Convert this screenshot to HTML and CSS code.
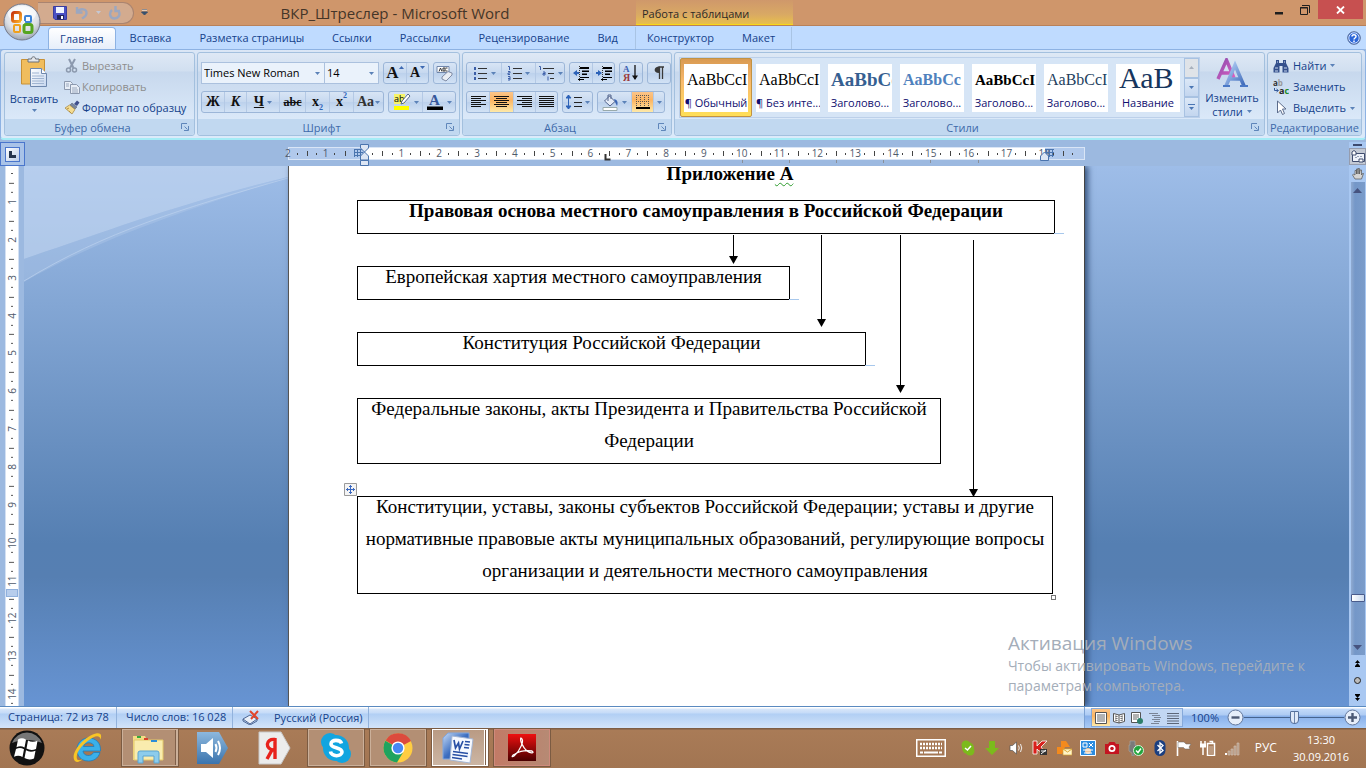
FILE: index.html
```html
<!DOCTYPE html>
<html lang="ru">
<head>
<meta charset="utf-8">
<title>ВКР_Штреслер - Microsoft Word</title>
<link rel="stylesheet" href="styles.css">
</head>
<body>
<svg class="defs" aria-hidden="true">
  <defs>
    <linearGradient id="gPaper" x1="0" y1="0" x2="1" y2="1"><stop offset="0" stop-color="#fff"/><stop offset="1" stop-color="#c5d6ee"/></linearGradient>
    <linearGradient id="gBlueA" x1="0" y1="0" x2="1" y2="1"><stop offset="0" stop-color="#b6d2f8"/><stop offset="1" stop-color="#3c68b8"/></linearGradient>
    <linearGradient id="gPinkA" x1="0" y1="0" x2="1" y2="1"><stop offset="0" stop-color="#8b4fb0"/><stop offset="1" stop-color="#e05fc0"/></linearGradient>
    <linearGradient id="gOrange" x1="0" y1="0" x2="1" y2="1"><stop offset="0" stop-color="#c8350c"/><stop offset="1" stop-color="#fbae26"/></linearGradient>
    <radialGradient id="gOrb" cx=".5" cy=".3" r=".75"><stop offset="0" stop-color="#fff"/><stop offset=".6" stop-color="#dde0e6"/><stop offset="1" stop-color="#8f98a8"/></radialGradient>
    <linearGradient id="gSpk" x1="0" y1="0" x2="0" y2="1"><stop offset="0" stop-color="#8db8de"/><stop offset="1" stop-color="#3b74ad"/></linearGradient>
    <linearGradient id="gRed" x1="0" y1="0" x2="0" y2="1"><stop offset="0" stop-color="#ee1010"/><stop offset="1" stop-color="#4a0000"/></linearGradient>
    <linearGradient id="gWord" x1="0" y1="0" x2="1" y2="1"><stop offset="0" stop-color="#c7dcf7"/><stop offset=".5" stop-color="#3e6fc0"/><stop offset="1" stop-color="#1c3f90"/></linearGradient>
    <symbol id="dd" viewBox="0 0 5 3"><path d="M0 0h5L2.500 3z" fill="currentColor"/></symbol>
    <symbol id="launch" viewBox="0 0 8 8"><path d="M.5 6V.5H6M3.500 3.500l3 3M7.500 3v4.500H3" fill="none" stroke="#5f86ba"/></symbol>
  </defs>
</svg>

<header class="title">
  <button class="orb" aria-label="Кнопка Office">
    <svg width="38" height="38" viewBox="0 0 38 38"><circle cx="19" cy="19" r="18" fill="url(#gOrb)" stroke="#74798a"/><ellipse cx="19" cy="11" rx="14" ry="8" fill="#fff" opacity=".6"/>
      <g fill="none" stroke-width="3"><rect x="9.500" y="9.500" width="8" height="9" rx="2" stroke="url(#gOrange)"/><rect x="22" y="13" width="6" height="6" rx="1" stroke="#3c83d8" stroke-width="2"/><rect x="11" y="22" width="6" height="7" rx="1" stroke="#f0a01c" stroke-width="2"/><rect x="21" y="21.500" width="8" height="8" rx="2" stroke="#55a520"/></g>
      <path d="M18 19h4M20 17v4" stroke="#f4f4f4" stroke-width="2"/></svg>
  </button>
  <div class="qat">
    <button aria-label="Сохранить"><svg width="14" height="14" viewBox="0 0 14 14"><path d="M.5.5h13v13H2L.5 12z" fill="#4a50c4" stroke="#3a3d9e"/><path d="M3 1h8v6H3z" fill="#eef3ff"/><path d="M4 9h7v4.500H4z" fill="#20245e"/><path d="M8 10h2v3H8z" fill="#fff"/></svg></button>
    <button aria-label="Отменить"><svg width="14" height="14" viewBox="0 0 14 14"><path d="M2 1v5.500h5.500M2.500 6C5 2 12 2.500 11.500 7.500c-.3 3-3 4-4.500 5" fill="none" stroke="#9ba7c0" stroke-width="2.400"/></svg></button>
    <svg class="arr pale" width="5" height="3"><use href="#dd"/></svg>
    <button aria-label="Повторить"><svg width="14" height="14" viewBox="0 0 14 14"><path d="M7.500 0v5H12M10.500 5c2.500 4-.5 7.500-4 7.500C2 12.500.5 7 4 4" fill="none" stroke="#9ba7c0" stroke-width="2.400"/></svg></button>
  </div>
  <button class="qatmore" aria-label="Настройка панели"><svg width="7" height="7" viewBox="0 0 7 7"><path d="M1 1h5" stroke="#fff"/><path d="M1 0h5M.5 3h6L3.500 6z" fill="#36506e" stroke="#36506e"/></svg></button>
  <h1>ВКР_Штреслер - Microsoft Word</h1>
  <div class="context">Работа с таблицами</div>
  <div class="win">
    <button aria-label="Свернуть"><svg width="10" height="10"><path d="M1 7h8v2.500H1z" fill="#1e1e1e"/></svg></button>
    <button aria-label="Восстановить"><svg width="10" height="10"><path d="M.5 2.500h7v7h-7zM0 3h8M2 .5h7.500V8" fill="none" stroke="#1e1e1e"/></svg></button>
    <button class="close" aria-label="Закрыть"><svg width="9" height="8"><path d="M1 .5l7 7M8 .5l-7 7" stroke="#fff" stroke-width="1.800"/></svg></button>
  </div>
</header>

<nav class="tabs">
  <button class="on">Главная</button><button>Вставка</button><button>Разметка страницы</button><button>Ссылки</button><button>Рассылки</button><button>Рецензирование</button><button>Вид</button><span class="ctxtabs"><button>Конструктор</button><button>Макет</button></span>
  <button class="help" aria-label="Справка"><svg width="14" height="14" viewBox="0 0 14 14"><circle cx="7" cy="7" r="6.300" fill="#2c66d8" stroke="#5f6f92"/><circle cx="7" cy="7" r="5.200" fill="none" stroke="#cfe0ff"/><path d="M5 5.500c0-2.500 4-2.500 4 0 0 1.500-2 1.500-2 3M7 9.500V11" fill="none" stroke="#fff" stroke-width="1.500"/></svg></button>
</nav>

<main class="ribbon">
  <section class="group clip">
    <div class="body">
      <button class="big paste"><svg width="28" height="32" viewBox="0 0 28 32"><path d="M1.500 3.500h23V28h-23z" fill="#f0bd5e" stroke="#c79137"/><path d="M8 6V3h3.500c0-3 4-3 4 0H19v3z" fill="#e4e6ea" stroke="#6b7078"/><path d="M10.500 12.500h11l5 5v13h-16z" fill="url(#gPaper)" stroke="#6d87ad"/><path d="M21.500 12.500v5h5" fill="#fff" stroke="#6d87ad"/><path d="M12 17h7M12 20h12M12 22.500h12M12 25h12M12 27.500h12" stroke="#9fb4d1"/></svg><span>Вставить</span><svg class="arr" width="5" height="3"><use href="#dd"/></svg></button>
      <div class="list">
        <button class="off"><svg width="16" height="16" viewBox="0 0 16 16"><path d="M5 1l4.500 9M11 1L6 10" stroke="#8c99ae" stroke-width="2"/><circle cx="4.500" cy="12" r="2" fill="none" stroke="#8c99ae" stroke-width="1.500"/><circle cx="10.500" cy="12" r="2" fill="none" stroke="#8c99ae" stroke-width="1.500"/></svg>Вырезать</button>
        <button class="off"><svg width="16" height="16" viewBox="0 0 16 16"><path d="M.5 2.500h6l2 2v6h-8z" fill="#e8eef7" stroke="#8c99ae"/><path d="M6.500 5.500h6l3 3v6h-9z" fill="#e8eef7" stroke="#8c99ae"/><path d="M2 5h3M2 7h3M8 9h5M8 11h6M8 13h6" stroke="#9aa8bd"/></svg>Копировать</button>
        <button><svg width="16" height="16" viewBox="0 0 16 16"><path d="M10 4l3-3.500 2.500 2L13 6z" fill="#3f4f8c"/><path d="M8 3l5 4-2 2-5-4z" fill="#7a879e" stroke="#4a5670" stroke-width=".5"/><path d="M5.500 5L11 9.500 8 14 1 8z" fill="#f4dc92" stroke="#a08038" stroke-width=".7"/><path d="M5 11l2 2M3 9l2-1" stroke="#b8903c"/></svg>Формат по образцу</button>
      </div>
    </div>
    <h2>Буфер обмена<svg class="launch" width="8" height="8"><use href="#launch"/></svg></h2>
  </section>

  <section class="group font">
    <div class="body rows">
      <div class="row">
        <div class="pair"><label class="combo wide"><select aria-label="Шрифт"><option>Times New Roman</option></select><svg class="arr" width="5" height="3"><use href="#dd"/></svg></label><label class="combo"><select aria-label="Размер"><option>14</option></select><svg class="arr" width="5" height="3"><use href="#dd"/></svg></label></div>
        <div class="set"><button class="w22 serif s17" aria-label="Увеличить">A<svg class="mark" width="5" height="3"><path d="M0 3h5L2.500 0z" fill="#3d69b2"/></svg></button><button class="w22 serif s14" aria-label="Уменьшить">A<svg class="mark" width="5" height="3"><use href="#dd"/></svg></button></div>
        <div class="set"><button class="w22" aria-label="Очистить формат"><svg width="18" height="18" viewBox="0 0 18 18"><path d="M1 2.500h12v6H1z" fill="#fff" stroke="#7187ac"/><path d="M3 7.500L4.500 4 6 7.500M7 4h2v3H7zM9.500 4h2M9.500 7h2" stroke="#333" fill="none"/><path d="M6 13l6-5.500 4 1.500v2l-6 6-4-2z" fill="#e9edf4" stroke="#7f8ba5"/></svg></button></div>
      </div>
      <div class="row">
        <div class="set">
          <button class="w22 serif s14">Ж</button><button class="w22 serif s14"><i>К</i></button><button class="w33 serif s14"><u>Ч</u><svg class="arr" width="5" height="3"><use href="#dd"/></svg></button><button class="w26 serif s12"><s>abc</s></button><button class="w24 serif s14">x<sub>2</sub></button><button class="w24 serif s14">x<sup>2</sup></button><button class="w30 serif s14 plain">Aa<svg class="arr" width="5" height="3"><use href="#dd"/></svg></button>
        </div>
        <div class="set">
          <button class="w33" aria-label="Выделение"><svg width="18" height="18" viewBox="0 0 18 18"><path d="M1 1h11v10H1z" fill="#f6f46a"/><text x="1" y="9" class="tiny" font-size="9">ab</text><path d="M15 1l2 2-6 7-3 1 1-3z" fill="#fff" stroke="#586a8c"/><path d="M1 13h15v4H1z" fill="#ff0"/></svg><svg class="arr" width="5" height="3"><use href="#dd"/></svg></button><button class="w33" aria-label="Цвет текста"><svg width="18" height="18" viewBox="0 0 18 18"><text x="3" y="12" font-size="15" class="ser" fill="#35579a">A</text><path d="M1 13.500h16v3.500H1z" fill="#000"/></svg><svg class="arr" width="5" height="3"><use href="#dd"/></svg></button>
        </div>
      </div>
    </div>
    <h2>Шрифт<svg class="launch" width="8" height="8"><use href="#launch"/></svg></h2>
  </section>

  <section class="group para">
    <div class="body rows">
      <div class="row">
        <div class="set">
          <button class="w34" aria-label="Маркеры"><svg width="15" height="15" viewBox="0 0 15 15"><path d="M5 2.500h9M5 7.500h9M5 12.500h9" stroke="#333"/><path d="M1 1h2v3H1zM1 6h2v3H1zM1 11h2v3H1z" fill="#3c5fa8"/></svg><svg class="arr" width="5" height="3"><use href="#dd"/></svg></button><button class="w34" aria-label="Нумерация"><svg width="15" height="15" viewBox="0 0 15 15"><path d="M6 2.500h9M6 7.500h9M6 12.500h9" stroke="#333"/><path d="M1 .5h1.500V4M1 5.500h2v1.500H1v1.500h2M1 10.500h2v3.500H1M1 12.500h2" fill="none" stroke="#3c5fa8"/></svg><svg class="arr" width="5" height="3"><use href="#dd"/></svg></button><button class="w29" aria-label="Многоуровневый список"><svg width="17" height="15" viewBox="0 0 17 15"><path d="M5 2.500h11M10 7.500h6M12 12.500h4" stroke="#333"/><path d="M1 .5h1.500V4M5 6h2v3H5v-1.500h2M10 10.500v4" fill="none" stroke="#3c5fa8"/></svg><svg class="arr" width="5" height="3"><use href="#dd"/></svg></button>
        </div>
        <div class="set">
          <button class="w22" aria-label="Уменьшить отступ"><svg width="16" height="15" viewBox="0 0 16 15"><path d="M7 1h9v2H7zM9 4.500h7v1.500H9zM9 7.500h5V9H9zM7 11h9v1H7zM5 13h6v1H5z"/><path d="M6.500 0v15" stroke="#333" stroke-dasharray="1 1"/><path d="M0 7l4-3v2h2v2H4v2z" fill="#2c62b8"/></svg></button><button class="w22" aria-label="Увеличить отступ"><svg width="16" height="15" viewBox="0 0 16 15"><path d="M7 1h9v2H7zM9 4.500h7v1.500H9zM9 7.500h5V9H9zM7 11h9v1H7zM5 13h6v1H5z"/><path d="M6.500 0v15" stroke="#333" stroke-dasharray="1 1"/><path d="M6 7L2 4v2H0v2h2v2z" fill="#2c62b8"/></svg></button>
        </div>
        <div class="set"><button class="w22" aria-label="Сортировка"><svg width="16" height="18" viewBox="0 0 16 18"><text x="0" y="8" font-size="9" class="ser" fill="#3c5fb0">А</text><text x="0" y="17" font-size="10" class="ser" fill="#9c3a3a">Я</text><path d="M12 1v14" stroke="#111" stroke-width="1.300"/><path d="M9 11.500h6L12 16z" fill="#111"/></svg></button></div>
        <div class="set"><button class="w22 s14" aria-label="Все знаки"><svg width="12" height="14" viewBox="0 0 12 14"><path d="M5.500 1H11M6.500 1v12M9.500 1v12" stroke="#3a3a3a" stroke-width="1.300"/><path d="M6.500.5v6.500C0 7.500 0 .5 6.500.5z" fill="#3a3a3a"/></svg></button></div>
      </div>
      <div class="row">
        <div class="set">
          <button class="w22" aria-label="По левому краю"><svg width="15" height="12"><path d="M0 .5h15M0 2.500h10M0 4.500h15M0 6.500h10M0 8.500h15M0 10.500h10" stroke="#111"/></svg></button><button class="w24 sel" aria-label="По центру"><svg width="15" height="12"><path d="M0 .5h15M2 2.500h11M0 4.500h15M2 6.500h11M0 8.500h15M2 10.500h11" stroke="#111"/></svg></button><button class="w22" aria-label="По правому краю"><svg width="15" height="12"><path d="M0 .5h15M5 2.500h10M0 4.500h15M5 6.500h10M0 8.500h15M5 10.500h10" stroke="#111"/></svg></button><button class="w22" aria-label="По ширине"><svg width="15" height="12"><path d="M0 .5h15M0 2.500h15M0 4.500h15M0 6.500h15M0 8.500h15M0 10.500h15" stroke="#111"/></svg></button>
        </div>
        <div class="set"><button class="w29" aria-label="Интервал"><svg width="16" height="16" viewBox="0 0 16 16"><path d="M2.500 1v14M0 4l2.500-3L5 4zM0 12l2.500 3L5 12z" stroke="#2c62b8" fill="#2c62b8"/><path d="M8 3.500h8M8 8.500h8M8 12.500h8" stroke="#222" stroke-width="1.200"/></svg><svg class="arr" width="5" height="3"><use href="#dd"/></svg></button></div>
        <div class="set">
          <button class="w33" aria-label="Заливка"><svg width="17" height="17" viewBox="0 0 17 17"><path d="M7.500 2L13 7.500 8 12 2.500 7z" fill="#e4ebf7" stroke="#52648c"/><path d="M6 7V1h3v4" fill="none" stroke="#52648c"/><path d="M12 5c4 1 4 4 3 7l-2-4z" fill="#3c66b4"/><path d="M1 13.500h14v3H1z" fill="#fff" stroke="#9aa"/></svg><svg class="arr" width="5" height="3"><use href="#dd"/></svg></button><button class="w22 sel" aria-label="Границы"><svg width="14" height="14"><path d="M.5 0v13M4.500 0v13M8.500 0v13M12.500 0v13M0 .5h13M0 6.500h13" stroke="#555" stroke-dasharray="1 1"/><path d="M0 13h14" stroke="#000" stroke-width="2"/></svg></button><button class="w11" aria-label="Другие границы"><svg class="arr" width="5" height="3"><use href="#dd"/></svg></button>
        </div>
      </div>
    </div>
    <h2>Абзац<svg class="launch" width="8" height="8"><use href="#launch"/></svg></h2>
  </section>

  <section class="group styles">
    <div class="body">
      <div class="gallery">
        <button class="on"><span class="tile"><b>AaBbCcI</b><em>¶ Обычный</em></span></button>
        <button><span class="tile"><b>AaBbCcI</b><em>¶ Без инте...</em></span></button>
        <button><span class="tile h1"><b>AaBbCc</b><em>Заголово...</em></span></button>
        <button><span class="tile h2"><b>AaBbCc</b><em>Заголово...</em></span></button>
        <button><span class="tile h3"><b>AaBbCcI</b><em>Заголово...</em></span></button>
        <button><span class="tile h4"><b>AaBbCcI</b><em>Заголово...</em></span></button>
        <button><span class="tile name"><b>АаВ</b><em>Название</em></span></button>
        <div class="gscroll"><button class="dim" aria-label="Вверх"><svg width="5" height="3"><path d="M0 3h5L2.500 0z" fill="#a8b0bc"/></svg></button><button aria-label="Вниз"><svg width="5" height="3"><use href="#dd"/></svg></button><button aria-label="Все стили"><svg width="7" height="7"><path d="M0 .5h7" stroke="currentColor"/><path d="M1 3h5L3.500 6z" fill="currentColor"/></svg></button></div>
      </div>
      <button class="big change"><svg width="32" height="32" viewBox="0 0 32 32"><path d="M2 21L10.500 2 18 20M5 15h10" fill="none" stroke="url(#gPinkA)" stroke-width="3.400"/><path d="M10 28L19 7l9 21M13 21h12" fill="none" stroke="url(#gBlueA)" stroke-width="3.600"/><path d="M7 28h7M24 28h8" stroke="#4a78c6" stroke-width="2"/></svg><span>Изменить</span><span>стили <svg class="arr" width="5" height="3"><use href="#dd"/></svg></span></button>
    </div>
    <h2>Стили<svg class="launch" width="8" height="8"><use href="#launch"/></svg></h2>
  </section>

  <section class="group edit">
    <div class="body">
      <div class="list">
        <button><svg width="16" height="14" viewBox="0 0 16 14"><path d="M3 1h3v3h4V1h3v3l2.500 5v4.500h-6V7h-3v6.500h-6V9L3 4z" fill="#34508c"/><path d="M2 9h3M11 9h3M4 3h1M11 3h1M2 12h3M11 12h3" stroke="#c9d8f0" stroke-width="1.200"/></svg>Найти <svg class="arr" width="5" height="3"><use href="#dd"/></svg></button>
        <button><svg width="16" height="18" viewBox="0 0 16 18"><text x="0" y="8" font-size="8" class="tinyb" fill="#333">a<tspan fill="#999">b</tspan></text><text x="6" y="16" font-size="9" class="tinyb" fill="#222">a<tspan fill="#1c8c28">c</tspan></text><path d="M1.500 10v2.500H5M3.500 11l2 1.500-2 1.500" fill="none" stroke="#345a9c"/></svg>Заменить</button>
        <button><svg width="16" height="16" viewBox="0 0 16 16"><path d="M4.500 1v12l3-3 2 4.500 2-1-2-4.500H13z" fill="#fff" stroke="#5c6c8c"/></svg>Выделить <svg class="arr" width="5" height="3"><use href="#dd"/></svg></button>
      </div>
    </div>
    <h2>Редактирование</h2>
  </section>
</main>

<div class="desk">
  <div class="leftcol">
    <button class="tabsel" aria-label="Табуляция"><span><svg width="7" height="7"><path d="M1.500 0v5.500H7" fill="none" stroke="#24344e" stroke-width="3"/></svg></span></button>
    <div class="vruler"><div class="vtop"></div><div class="vcells"><span>1</span><span>2</span><span>3</span><span>4</span><span>5</span><span>6</span><span>7</span><span>8</span><span>9</span><span>10</span><span>11</span><span>12</span><span>13</span><span>14</span></div><i class="rowmark"></i></div>
  </div>
  <div class="center">
    <div class="hrow">
      <div class="hruler">
        <div class="hcells"><span>2</span><span>1</span><span></span><span>1</span><span>2</span><span>3</span><span>4</span><span>5</span><span>6</span><span>7</span><span>8</span><span>9</span><span>10</span><span>11</span><span>12</span><span>13</span><span>14</span><span>15</span><span>16</span><span>17</span><span>18</span><span></span></div>
        <svg class="marks" width="796" height="24" viewBox="0 0 796 24">
          <path d="M66 7.500h9M66 10.500h9M66 13.500h9M66.500 7v8M69.500 7v8M72.500 7v8M757 7.500h9M757 10.500h9M757 13.500h9M758.500 7v8M761.500 7v8M764.500 7v8" stroke="#4a74ae"/>
          <path d="M72.500 2.500h8V6l-4 4-4-4zM72.500 18v-4l4-4 4 4v4zM72.500 18.500h8v5h-8zM752.500 18.500V14l4-4 4 4v4.500z" fill="#dde6f4" stroke="#4a74ae"/>
          <path d="M317.500 12v5.500h5" fill="none" stroke="#333" stroke-width="2"/>
          <path d="M454.500 18v3M501.500 18v3M548.500 18v3M595.500 18v3M642.500 18v3M690.500 18v3" stroke="#8a8f98"/>
        </svg>
      </div>
    </div>
    <div class="work">
      <svg class="swoosh" viewBox="0 0 264 116" width="264" height="116"><path d="M0 0h264v11C160 36 80 66 0 93z" fill="#c6d8f1" opacity=".6"/><path d="M0 93C80 66 160 36 264 11 170 42 80 70 0 116z" fill="#b4cbea" opacity=".35"/><path d="M0 115C80 66 160 42 264 12" fill="none" stroke="#bcd2ee" opacity=".7"/></svg>
      <article class="page">
        <p class="apx">Приложение<span class="wave"> А</span></p>
        <div class="cell c1"><p><strong>Правовая основа местного самоуправления в Российской Федерации</strong></p></div>
        <div class="cell c2"><p>Европейская хартия местного самоуправления</p></div>
        <div class="cell c3"><p>Конституция Российской Федерации</p></div>
        <div class="cell c4"><p>Федеральные законы, акты Президента и Правительства Российской<br>Федерации</p></div>
        <div class="cell c5"><svg class="move" width="13" height="13"><path d="M.5.5h12v12H.5z" fill="#f4f4f4" stroke="#9a9a9a"/><path d="M6.500 2v9M2 6.500h9M5 3.500h3M5 9.500h3M3.500 5v3M9.500 5v3" stroke="#3a68c0"/></svg><p>Конституции, уставы, законы субъектов Российской Федерации; уставы и другие<br>нормативные правовые акты муниципальных образований, регулирующие вопросы<br>организации и деятельности местного самоуправления</p><i class="grip"></i></div>
        <svg class="arrows" width="796" height="340" viewBox="0 0 796 340"><path d="M445.500 69v22M533.500 69v85M612.500 69v151M685.500 74v250" stroke="#000"/><path d="M441 90h9l-4.500 8zM529 153h9l-4.500 8zM608 219h9l-4.500 8zM681 323h9l-4.500 8z"/></svg>
      </article>
      <aside class="activate"><strong>Активация Windows</strong><span>Чтобы активировать Windows, перейдите к<br>параметрам компьютера.</span></aside>
    </div>
  </div>
  <div class="vbar">
    <i class="split"></i>
    <button class="rul" aria-label="Линейка"><svg width="14" height="13" viewBox="0 0 14 13"><path d="M4 3.500h9.500v8H1.500V5" fill="#eef2fa" stroke="#3f4c6e"/><path d="M1 2l2-1.500L5 2v3H1zM8 9h4v3H8zM5 7v1M7 6v1M10 6v1" fill="#fff" stroke="#3f4c6e"/></svg></button>
    <button class="hand" aria-label="Рука"><svg width="12" height="12" viewBox="0 0 12 12"><path d="M3 11L.5 7l1-1L3 7V2.500h1.500V6 1H6v5V.5h1.500V6l.5-4h1.500v5l1-1.500h1L9.500 11z" fill="#d4d4d4" stroke="#555" stroke-width=".7"/></svg></button>
    <div class="track"><svg width="9" height="5"><path d="M0 5h9L4.500 0z" fill="#46537f"/></svg><i class="thumb"></i><svg width="9" height="5"><path d="M0 0h9L4.500 5z" fill="#46537f"/></svg></div>
    <div class="browse"><svg width="5" height="7"><path d="M0 3h5L2.500 0zM0 6h5L2.500 3zM0 6h5v1H0z"/></svg><svg width="7" height="7"><circle cx="3.500" cy="3.500" r="3" fill="#bcbcbc" stroke="#222"/></svg><svg width="5" height="7"><path d="M0 0h5v1H0zM0 1h5L2.500 4zM0 4h5L2.500 7z"/></svg></div>
  </div>
</div>

<footer class="status">
  <span class="st p1">Страница: 72 из 78</span><span class="st p2">Число слов: 16 028</span><span class="st p3"><svg width="18" height="15" viewBox="0 0 18 15"><path d="M1 9l7-4 7 4-7 5z" fill="#e9eff8" stroke="#4c6694"/><path d="M1 9v2l7 4 7-4V9" fill="none" stroke="#4c6694"/><path d="M8 1l8 8M16 1L9 9" stroke="#e2462c" stroke-width="2"/></svg><span>Русский (Россия)</span></span>
  <div class="stright">
    <div class="views">
      <button class="sel" aria-label="Разметка страницы"><svg width="12" height="12"><path d="M.5.5h11v11H.5z" fill="#fff" stroke="#555"/><path d="M2 3h8M2 5h8M2 7h8M2 9h8" stroke="#666"/></svg></button>
      <button aria-label="Чтение"><svg width="12" height="12"><path d="M.5 1.500L6 3l5.500-1.500v8L6 11 .5 9.500zM6 3v8M2 4l2.500.5M2 6l2.500.5M2 8l2.500.5M10 4l-2.500.5M10 6l-2.500.5M10 8l-2.500.5" fill="#fff" stroke="#555"/></svg></button>
      <button aria-label="Веб-документ"><svg width="12" height="12"><path d="M.5.5h9v10h-9z" fill="#fff" stroke="#555"/><path d="M2 3h6M2 5h6M2 7h4" stroke="#666"/><circle cx="9" cy="9" r="3" fill="#2d7f6a"/></svg></button>
      <button aria-label="Структура"><svg width="12" height="12"><path d="M0 1.500h9M3 3.500h8M5 5.500h7M3 7.500h8M5 9.500h6M2 11.500h8" stroke="#7a8496"/></svg></button>
      <button aria-label="Черновик"><svg width="12" height="12"><path d="M0 1.500h12M0 4h12M0 6.500h12M0 9h12M0 11.500h12" stroke="#5c6678"/></svg></button>
    </div>
    <span class="pct">100%</span>
    <button class="zb" aria-label="Уменьшить масштаб"><svg width="17" height="17"><circle cx="8.500" cy="8.500" r="7.500" fill="#e6eefa" stroke="#64789c"/><path d="M4.500 8.500h8" stroke="#4d5a74" stroke-width="2.400"/></svg></button>
    <input type="range" min="10" max="190" value="100" aria-label="Масштаб">
    <button class="zb" aria-label="Увеличить масштаб"><svg width="17" height="17"><circle cx="8.500" cy="8.500" r="7.500" fill="#e6eefa" stroke="#64789c"/><path d="M4 8.500h9M8.500 4v9" stroke="#4d5a74" stroke-width="2.400"/></svg></button>
  </div>
</footer>

<footer class="taskbar">
  <div class="apps">
  <button class="start" aria-label="Пуск"><svg width="36" height="36" viewBox="0 0 36 36"><circle cx="18" cy="18" r="17.500" fill="#111"/><path d="M3 13a16 16 0 0 1 30 0c-9-4-21-4-30 0z" fill="#777"/><path d="M9 9.500q4-2.500 8 .2l-1.500 7.800q-4-2.500-8-.2zM19 10.500q4 2.500 9.500.3L27 19q-5 2-9.500-.5zM7 19q4-2.300 8 .3L13.500 27q-4-2.500-8.500-.3zM17 20.300q4 2.500 9.500.5L25 28.500q-5 2-9.500-.5z" fill="#fff"/></svg></button>
  <button class="app" aria-label="Internet Explorer"><svg width="32" height="32" viewBox="0 0 32 32"><path d="M28 20.500C26 27 21 29 16.500 29 9 29 5 24 5 17.500S10 6 16.500 6C24 6 29 11 28.500 19H11c.5 5.500 8.500 6 10.500 1.500zM11.500 14.500h10.500c-.5-5-9.500-5-10.500 0z" fill="#3bb0ea" stroke="#1c7ec0" stroke-width=".8"/><path d="M3 29C-3 22 12 4 24 1.500c5-1 6 2 4.500 6C28 4 25 3.500 21 5.500 11 11 3 21 5 27c1 2 4 1 6 0-3 2.500-6 4-8 2z" fill="#f8c526"/></svg></button>
  <button class="app open multi" aria-label="Проводник"><svg width="34" height="32" viewBox="0 0 34 32"><path d="M2 4h12l2 4h15v20H2z" fill="#f4dc84"/><path d="M3 8h29v20H3z" fill="#f9ecae" stroke="#e3c868"/><path d="M6 4h4v2H6z" fill="#35a83c"/><path d="M13 6h4v2h-4z" fill="#d8412c"/><path d="M20 8h6v2h-6z" fill="#2c8cd8"/><path d="M7 31V21q0-2 2-2h17q2 0 2 2v10h-5v-7H12v7z" fill="#8cccec" stroke="#5aa4d0"/></svg></button>
  <button class="app" aria-label="Звук"><svg width="33" height="34" viewBox="0 0 33 34"><path d="M1 1h22l9 16-9 16H1z" fill="url(#gSpk)"/><path d="M5 13h5l7-6v20l-7-6H5z" fill="#fff"/><path d="M19.500 13q2 4 0 8M22 10q4 7 0 14" fill="none" stroke="#fff" stroke-width="2"/></svg></button>
  <button class="app" aria-label="Яндекс"><svg width="33" height="34" viewBox="0 0 33 34"><path d="M1 1h22l9 16-9 16H1z" fill="#ececec" stroke="#c8c8c8"/><path d="M17 7v21M17 8.500c-10-1.500-10 10.500-1 10.500h1M14 19l-5 9" fill="none" stroke="#e8221c" stroke-width="3.400"/></svg></button>
  <button class="app open" aria-label="Skype"><svg width="32" height="32" viewBox="0 0 32 32"><circle cx="10" cy="10" r="9" fill="#12a5e0"/><circle cx="22" cy="22" r="9" fill="#12a5e0"/><circle cx="16" cy="16" r="13" fill="#12a5e0"/><path d="M21.500 11.500c-1-4-10.500-4.500-10.500.5 0 4.500 11 3 11 8 0 5-11 5-11.500-.5" fill="none" stroke="#fff" stroke-width="3.600"/></svg></button>
  <button class="app open" aria-label="Chrome"><svg width="30" height="30" viewBox="0 0 30 30"><circle cx="15" cy="15" r="14.500" fill="#ffcd42"/><path d="M15 15L2.500 7.500A14.500 14.500 0 0 1 28 8z" fill="#dc4a3d"/><path d="M15 15L2.400 7.800A14.500 14.500 0 0 0 14 29.500l6-10z" fill="#1fa35f"/><circle cx="15" cy="15" r="6.600" fill="#fff"/><circle cx="15" cy="15" r="5.200" fill="#4688f4"/></svg></button>
  <button class="app open multi cur" aria-label="Word"><svg width="32" height="32" viewBox="0 0 32 32"><path d="M6 1h21v26H1V6z" fill="url(#gWord)" stroke="#7fa6e0"/><path d="M10 4l21 3-3 24-20-3z" fill="#f6f9ff" stroke="#a4b6d4"/><path d="M12 8l1.500 8 3-5 1 6 3.500-8M23 9.500l5 .5M22.500 12.500l5 .5M22 15.500l5 .5M11 19.500l15 2M10.500 22.500l15 2M10 25.500l10 1.500" fill="none" stroke="#284fa4" stroke-width="1.700"/></svg></button>
  <button class="app open pdf" aria-label="Acrobat"><svg width="28" height="27" viewBox="0 0 28 27"><path d="M0 0h28v27H0z" fill="url(#gRed)"/><path d="M13 4c4 2-1 13-7 18-3 2-2-1 1-2 5-3 11-4 17-3 3 2-1 3-5 0C15 13.500 11.500 6 13 4z" fill="none" stroke="#fff" stroke-width="1.300"/></svg></button>
  </div>
  <div class="tray">
    <svg class="kb" width="30" height="18"><path d="M.5.5h29v17H.5z" fill="none" stroke="#fff" stroke-width="2"/><path d="M4 5h22M4 9h22" stroke="#fff" stroke-width="2.500" stroke-dasharray="2 1"/><path d="M4 13.500h3M8 13.500h14M23 13.500h3" stroke="#fff" stroke-width="2"/></svg>
    <svg width="16" height="16"><circle cx="6" cy="5" r="4.500" fill="#7cba1c"/><circle cx="10" cy="11" r="4.500" fill="#7cba1c"/><circle cx="8" cy="8" r="6" fill="#7cba1c"/><path d="M5 8l2.500 2L11 6" fill="none" stroke="#fff" stroke-width="1.500"/></svg>
    <svg width="16" height="16"><path d="M5 1h6v7h4l-7 7-7-7h4z" fill="#7cba1c"/></svg>
    <svg width="16" height="16"><path d="M2 5.500h2.500L8.500 2v12l-4-3.500H2z" fill="#fff" stroke="#555" stroke-width=".7"/><path d="M10.500 5.500q1.500 2.500 0 5M12.500 4q2.500 4 0 8" fill="none" stroke="#eee"/></svg>
    <svg width="16" height="16"><path d="M1 1h4v5l5-5h5L9 7l3 4H7l-2-2v5H1z" fill="#d8201c" stroke="#fff" stroke-width=".8"/><path d="M8 9h7v6H8z" fill="#333"/><path d="M9 14l5-4M9 11h5" stroke="#fff"/></svg>
    <svg width="16" height="16"><path d="M5 1h5l4 6H9L6 14H1V7h4z" fill="#f48a1c"/><path d="M7 9h9v6H7z" fill="#fff4c8" stroke="#d8a838" stroke-width=".7"/><path d="M7 9l4.500 3L16 9" fill="none" stroke="#d8a838"/></svg>
    <svg width="16" height="16"><path d="M.5.5h15v15H.5z" fill="#2c8ce0" stroke="#fff"/><path d="M3 3h4v4H3zM9 3l4 4M13 3L9 7" fill="none" stroke="#fff"/><circle cx="8" cy="11" r="3" fill="#f0c8a0"/><path d="M3 10h10M4 13h8" stroke="#fff"/></svg>
    <svg width="16" height="16"><path d="M1 4h3l1.500-2h5L12 4h3v10H1z" fill="#c41420"/><circle cx="8" cy="8.500" r="3.500" fill="#fff"/><circle cx="8" cy="8.500" r="1.800" fill="#c41420"/></svg>
    <svg width="16" height="16"><path d="M2 1h5v4h1v6l-2 2v3H4v-3l-3-2V5h1z" fill="#7a7a7a" stroke="#aaa" stroke-width=".6"/><circle cx="10.500" cy="10.500" r="5" fill="#22a43c" stroke="#d8f0d8"/><path d="M8 10.500l2 2 3-4" fill="none" stroke="#fff" stroke-width="1.500"/></svg>
    <svg width="16" height="16"><rect x="2.500" width="11" height="16" rx="5.500" fill="#1b3f80"/><path d="M5.500 5l5.500 5.500L8 13V3l3 2.500L5.500 11" fill="none" stroke="#fff" stroke-width="1.300"/></svg>
    <svg width="16" height="16"><path d="M1.500 1v15" stroke="#fff" stroke-width="1.600"/><path d="M2 2h6l2 2h5l-2 3 1 2H9L7.500 7.500H2z" fill="#fff" stroke="#666" stroke-width=".5"/></svg>
    <svg width="16" height="16"><path d="M7.500 3.500h7v12h-7zM9.500 1.500h3v2" fill="none" stroke="#fff" stroke-width="1.500"/><path d="M9 6h4v8H9z" fill="#fff" opacity=".25"/><path d="M1 1v3M5 1v3M3 7v8" stroke="#fff" stroke-width="1.500"/><path d="M0 3.500h6v4H0z" fill="#fff"/></svg>
    <svg width="16" height="16"><path d="M1 13h2v2H1z" fill="#fff"/><path d="M4 11h2v4H4zM7 9h2v6H7zM10 6h2v9h-2zM13 3h2v12h-2z" fill="#b39a86" stroke="#d8c8ba" stroke-width=".6"/></svg>
    <span class="lang">РУС</span>
    <time>13:30<br>30.09.2016</time>
  </div>
</footer>
</body>
</html>
```
FILE: styles.css
```css
* { box-sizing: border-box; }
html, body { height: 100%; }
body {
  margin: 0;
  display: flex;
  flex-direction: column;
  overflow: hidden;
  font: 12px/16px "Open Sans", "Noto Sans", sans-serif;
  color: #15428b;
  background: #9cb9e0;
}
button {
  margin: 0;
  padding: 0;
  border: 0;
  background: none;
  font: inherit;
  color: inherit;
  display: flex;
  align-items: center;
  justify-content: center;
}
h1, h2, p { margin: 0; font-weight: normal; }
svg { flex: none; display: block; }
.defs { position: absolute; width: 0; height: 0; }
.arr { color: #5b82b8; }
.arr.pale { color: #c4c8d4; }
.ser { font-family: "Liberation Serif", serif; font-weight: bold; }
.tiny { font-family: "Open Sans", sans-serif; }
.tinyb { font-family: "Open Sans", sans-serif; font-weight: bold; }

/* title bar */
.title {
  position: relative;
  flex: none;
  height: 26px;
  display: flex;
  align-items: center;
  background: #cf966b;
  border-bottom: 1px solid #b98159;
}
.orb { position: absolute; left: 3px; top: 3px; z-index: 2; }
.qat {
  margin-left: 38px;
  width: 96px;
  height: 22px;
  padding-left: 15px;
  display: flex;
  align-items: center;
  gap: 8px;
  border: 1px solid #aa8470;
  border-left: 0;
  border-radius: 0 11px 11px 0;
  background: #d3ab8f;
}
.qat .arr { margin: 0 -1px; }
.qatmore { width: 20px; height: 22px; }
.title h1 {
  flex: 0 0 482px;
  text-align: center;
  font-size: 15px;
  line-height: 24px;
  color: #443528;
}
.context {
  flex: none;
  width: 157px;
  height: 25px;
  padding-left: 6px;
  line-height: 28px;
  font-size: 11px;
  color: #2d2a26;
  background: linear-gradient(#cf986b, #d9a964 60%, #e8bf4c);
  border-bottom: 1px solid #f8d818;
}
.win { margin-left: auto; margin-right: 3px; align-self: flex-start; display: flex; }
.win button { width: 26px; height: 19px; }
.win .close { width: 45px; background: #c75050; }

/* tabs */
.tabs {
  flex: none;
  height: 23px;
  padding-left: 48px;
  display: flex;
  align-items: flex-end;
  background: #bfdbff;
}
.tabs button { height: 22px; padding: 0 14px; font-size: 11px; }
.tabs .on {
  padding: 0 11px;
  background: linear-gradient(#fff, #e6eefa);
  border: 1px solid #8db2e3;
  border-bottom: 0;
  border-radius: 4px 4px 0 0;
}
.ctxtabs {
  display: flex;
  margin-left: 3px;
  padding-right: 2px;
  border: 1px solid #a9c4e4;
  border-width: 0 1px;
}
.ctxtabs button:first-child { padding-left: 11px; }
.tabs .help { margin-left: auto; padding: 0 5px 0 0; }

/* ribbon */
.ribbon {
  flex: none;
  height: 91px;
  padding: 2px 3px;
  display: flex;
  gap: 2px;
  background: linear-gradient(#dbe7f6, #c8d9ee 25%, #dceafa);
  border: 1px solid #8db2e3;
  border-bottom: 2px solid #a5ecf6;
  border-radius: 4px;
}
.group {
  flex: none;
  display: flex;
  flex-direction: column;
  border: 1px solid #a3c0de;
  border-radius: 3px;
  background: linear-gradient(#dee8f5, #d1dff0 18px, #c7d8ed 19px, #dbe9f9 68px);
}
.clip { width: 191px; }
.font { width: 263px; }
.para { width: 210px; }
.styles { flex: 1 1 auto; }
.edit { width: 95px; }
.group h2 {
  position: relative;
  flex: none;
  height: 16px;
  padding-right: 14px;
  text-align: center;
  font-size: 11px;
  line-height: 18px;
  color: #3e6aaa;
  background: #c1d8f0;
  border-radius: 0 0 3px 3px;
}
.edit h2 { padding-right: 0; }
.launch { position: absolute; right: 5px; top: 4px; }
.body { flex: 1; min-height: 0; display: flex; }
.rows { flex-direction: column; gap: 7px; padding: 9px 0 0 3px; }
.row { display: flex; gap: 4px; }
.big { flex-direction: column; justify-content: flex-start; font-size: 11px; line-height: 13px; }
.paste { width: 58px; padding-top: 3px; gap: 4px; }
.change { width: 64px; padding-top: 5px; line-height: 13px; gap: 1px; }
.change span { display: flex; align-items: center; gap: 4px; }
.list { padding: 2px 0 0 1px; display: flex; flex-direction: column; }
.list button { height: 22px; gap: 2px; justify-content: flex-start; font-size: 11px; white-space: nowrap; }
.list .off { color: #8d8d8d; }
.edit .list { padding-left: 5px; }
.edit .list button { gap: 4px; }

.pair { display: flex; }
.combo {
  width: 54px;
  height: 22px;
  padding-right: 4px;
  display: flex;
  align-items: center;
  background: #eaf2fb;
  border: 1px solid #abc1de;
}
.combo.wide { width: 124px; }
.combo select {
  flex: 1;
  min-width: 0;
  appearance: none;
  border: 0;
  padding: 0 0 0 2px;
  background: none;
  font: inherit;
  font-size: 11px;
  color: #000;
}
.combo + .combo { border-left: 0; }
.set {
  height: 22px;
  display: flex;
  border: 1px solid #9cb6d8;
  border-radius: 3px;
  background: linear-gradient(#d8e5f5, #c6d8ef 50%, #bcd1ec 51%, #d2e2f5);
}
.set button { height: 20px; gap: 3px; border-left: 1px solid #b4c9e5; color: #111; }
.set button:first-child { border-left: 0; }
.set .sel, .views .sel { background: linear-gradient(#fbc58a, #fbb462 40%, #fee9a8); }
.set .mark { align-self: flex-start; margin: 3px 0 0 -3px; color: #3d69b2; }
.w11 { width: 11px; }
.w22 { width: 22px; }
.w24 { width: 24px; }
.w26 { width: 26px; }
.w29 { width: 29px; }
.w30 { width: 30px; }
.w33 { width: 33px; }
.w34 { width: 34px; }
.set .serif { font-family: "Liberation Serif", serif; font-weight: bold; }
.set .plain { color: #333; gap: 1px; }
.set .s17 { font-size: 17px; }
.set .s14 { font-size: 14px; }
.set .s12 { font-size: 12px; }
.set sub, .set sup { font-size: 8px; line-height: 8px; color: #2c62b8; }
.set sub { align-self: flex-end; }
.set sup { align-self: flex-start; }
.set button:has(sub), .set button:has(sup) { gap: 0; }

.gallery {
  flex: none;
  margin: 4px 0 0 4px;
  height: 61px;
  display: flex;
  background: #d6e5f6;
  border: 1px solid #bcd0ea;
}
.gallery > button { width: 72px; padding: 2px; }
.gallery > .on {
  background: linear-gradient(#d99a52, #f9ba6c 40%, #ffdf58);
  border: 1px solid #c29242;
  padding: 1px;
  border-radius: 2px;
}
.tile {
  width: 64px;
  height: 48px;
  overflow: hidden;
  display: flex;
  flex-direction: column;
  background: #fff;
  font-family: "Liberation Serif", serif;
  color: #000;
}
.tile b {
  height: 32px;
  padding-left: 3px;
  text-align: left;
  font-size: 16px;
  line-height: 32px;
  font-weight: normal;
  white-space: nowrap;
}
.tile em {
  font: 11px/14px "Open Sans", sans-serif;
  color: #101070;
  text-align: center;
  white-space: nowrap;
}
.tile.h1 b { font-size: 19px; font-weight: bold; color: #365f91; }
.tile.h2 b { font-size: 16px; font-weight: bold; color: #4f81bd; }
.tile.h3 b { font-size: 15px; font-weight: bold; }
.tile.h4 b { color: #243f60; }
.tile.name b { font-size: 30px; line-height: 28px; color: #17365d; }
.gscroll { width: 15px; display: flex; flex-direction: column; }
.gscroll button {
  flex: 1;
  color: #4a76b4;
  border: 1px solid #a8c2e2;
  background: linear-gradient(#dce8f7, #c3d6ef);
}
.gscroll .dim { background: #dfe3e8; }

/* workspace */
.desk { flex: 1; min-height: 0; display: flex; padding-top: 2px; }
.leftcol { flex: none; width: 24px; display: flex; flex-direction: column; }
.tabsel {
  flex: none;
  width: 25px;
  height: 24px;
  background: #a9c3e8;
  border: 1px solid #4a76cc;
}
.tabsel span {
  width: 15px;
  height: 15px;
  display: flex;
  align-items: center;
  justify-content: center;
  border: 1px solid #4a76cc;
  background: linear-gradient(135deg, #fff, #b9cbe8);
}
.vruler {
  position: relative;
  flex: 1;
  min-height: 0;
  width: 14px;
  margin-left: 5px;
  overflow: hidden;
  display: flex;
  flex-direction: column;
  background: #fff;
  border: 1px solid #d3e0f3;
  border-width: 0 1px;
}
.vtop {
  flex: none;
  height: 17px;
  background: linear-gradient(#555, #555) 50% 7px / 2px 1px no-repeat;
}
.vcells { flex: none; height: 530px; display: grid; grid-template-rows: repeat(14, 1fr); }
.vcells span {
  writing-mode: vertical-rl;
  transform: rotate(180deg);
  font-size: 10px;
  line-height: 12px;
  text-align: center;
  color: #4f5a6c;
  background:
    linear-gradient(#555, #555) 50% 25% / 2px 1px no-repeat,
    linear-gradient(#555, #555) 50% 75% / 2px 1px no-repeat,
    linear-gradient(#555, #555) 50% 100% / 5px 1px no-repeat;
}
.rowmark { position: absolute; left: 0; top: 423px; width: 12px; height: 8px; background: #b7cdec; border: 1px solid #8fb0dd; }
.center { flex: 1; min-width: 0; display: flex; flex-direction: column; }
.hrow { flex: none; height: 24px; display: flex; justify-content: center; }
.hruler {
  position: relative;
  width: 797px;
  height: 13px;
  margin-top: 5px;
  border: 1px solid #d9e5f6;
  background: linear-gradient(90deg, #b1c9ec 76px, #fff 76px, #fff 756px, #b1c9ec 756px);
}
.hcells { width: 832px; margin: -1px 0 0 -20px; display: grid; grid-template-columns: repeat(22, 1fr); }
.hcells span {
  height: 13px;
  font-size: 10px;
  line-height: 13px;
  text-align: center;
  color: #4f5a6c;
  background:
    linear-gradient(#444, #444) 0 50% / 1px 5px no-repeat,
    linear-gradient(#444, #444) 25% 50% / 1px 2px no-repeat,
    linear-gradient(#444, #444) 75% 50% / 1px 2px no-repeat;
}
.hcells span:first-child { background: linear-gradient(#444, #444) 75% 50% / 1px 2px no-repeat; }
.hcells span:last-child {
  background:
    linear-gradient(#444, #444) 0 50% / 1px 5px no-repeat,
    linear-gradient(#444, #444) 25% 50% / 1px 2px no-repeat;
}
.marks { position: absolute; left: -1px; top: -6px; }
.work {
  position: relative;
  flex: 1;
  min-height: 0;
  overflow: hidden;
  display: flex;
  justify-content: center;
  background: linear-gradient(#9ebde8, #557fb2 70%, #567fb2 76%, #6794d3);
}
.swoosh { position: absolute; left: 0; top: 0; }
.page {
  position: relative;
  width: 797px;
  padding-left: 69px;
  background: #fff;
  border-left: 1px solid #555;
  border-right: 1px solid #444;
  box-shadow: 3px 0 6px #35527c;
  font-family: "Liberation Serif", serif;
  font-size: 19px;
  line-height: 32px;
  color: #000;
}
.apx {
  width: 697px;
  margin-bottom: 18px;
  text-indent: 47px;
  line-height: 16px;
  font-weight: bold;
  text-align: center;
}
.wave { text-decoration: underline wavy #2c9c2c 1px; text-underline-offset: 2px; white-space: pre; }
.cell { position: relative; margin-bottom: 32px; margin-left: -1px; border: 1px solid #000; text-align: center; white-space: nowrap; }
.cell p { margin: -6px 0 6px; display: flow-root; }
.c1 { width: 698px; }
.c2 { width: 433px; }
.c3 { width: 509px; }
.c4 { width: 584px; }
.c5 { width: 696px; }
.c1::after, .c2::after, .c3::after { content: ""; position: absolute; left: 100%; bottom: -1px; width: 10px; height: 1px; background: #a8c8ec; }
.move { position: absolute; left: -14px; top: -14px; }
.grip { position: absolute; right: -4px; bottom: -7px; width: 5px; height: 5px; background: #fff; border: 1px solid #777; }
.arrows { position: absolute; left: -1px; top: 0; }
.activate {
  position: absolute;
  right: 44px;
  bottom: 10px;
  color: #a4adb9;
  font-size: 14px;
  line-height: 20px;
  white-space: nowrap;
}
.activate strong { display: block; font-size: 19px; line-height: 26px; font-weight: normal; }
.activate span { display: block; }

.vbar { flex: none; width: 17px; display: flex; flex-direction: column; align-items: center; background: #a9c8f2; }
.split { width: 9px; height: 2px; margin: 2px 0; background: #3d4a6e; }
.rul { width: 17px; height: 17px; background: #c3c9d4; border: 1px solid #959cae; }
.hand { width: 17px; height: 17px; }
.track {
  position: relative;
  flex: 1;
  width: 14px;
  padding: 6px 0 5px;
  display: flex;
  flex-direction: column;
  align-items: center;
  justify-content: space-between;
  background: linear-gradient(90deg, #90aad0, #7497c8 4px, #7b9cca);
}
.thumb { position: absolute; left: 0; bottom: 53px; width: 14px; height: 8px; background: linear-gradient(90deg, #fff, #c8d8ee); border: 1px solid #4a5c8c; border-radius: 1px; }
.browse { height: 51px; padding: 5px 0; display: flex; flex-direction: column; align-items: center; justify-content: space-between; }

/* status bar */
.status {
  flex: none;
  height: 22px;
  display: flex;
  align-items: stretch;
  border-top: 1px solid #5a8ac0;
  font-size: 11px;
  line-height: 20px;
  background: linear-gradient(#fff 1px, #d7e6f9 2px, #c5dbf8 6px, #b1cff4 7px, #d3e4f9);
}
.st { padding-left: 9px; border-right: 1px solid #92b2dc; }
.p1 { width: 117px; padding-left: 8px; }
.p2 { width: 116px; }
.p3 { width: 136px; display: flex; align-items: center; gap: 14px; }
.stright {
  width: 282px;
  margin-left: auto;
  padding: 0 5px 0 6px;
  display: flex;
  align-items: center;
  border-left: 1px solid #7da2d4;
  background: linear-gradient(#fff 1px, #c3dafa 2px, #aecbf3 8px, #88b0ea 9px, #a9cbf7);
}
.views { display: flex; border: 1px solid #86a9da; background: #c2d7f3; }
.views button { width: 18px; height: 17px; }
.pct { width: 44px; text-align: center; }
.status input {
  flex: 1;
  min-width: 0;
  height: 17px;
  margin: 0;
  appearance: none;
  background: linear-gradient(#46648f, #46648f) 0 8px / 100% 1px no-repeat;
}
.status input::-webkit-slider-thumb {
  appearance: none;
  width: 9px;
  height: 13px;
  background: linear-gradient(90deg, #dfe9f8 3px, #6c85ac 3px, #6c85ac 4px, #dfe9f8 4px);
  border: 1px solid #57719c;
  border-radius: 1px 1px 4px 4px;
}
.zb { width: 17px; }

/* taskbar */
.taskbar {
  flex: none;
  height: 40px;
  display: flex;
  justify-content: space-between;
  background: linear-gradient(#7d5d44 1px, #a97b57 2px, #a27552);
}
.apps { display: flex; padding: 0 0 1px 9px; gap: 4px; }
.start { width: 36px; margin-right: 10px; }
.app { width: 58px; }
.open { border: 1px solid #7b5b42; box-shadow: inset 0 0 0 1px #cbb09a; background: #b38f74; }
.multi { padding-right: 5px; background: linear-gradient(90deg, transparent 53px, #80604a 53px, #80604a 54px, #cbb09a 54px, #cbb09a 55px, transparent 55px), #b38f74; }
.cur { box-shadow: inset 0 0 0 1px #fff; background: linear-gradient(90deg, transparent 52px, #fff 52px, #fff 53px, #80604a 53px, #80604a 54px, #fff 54px, #fff 55px, transparent 55px), linear-gradient(#b99a83, #ccb6a4); }
.pdf { background: linear-gradient(90deg, #c27a66, #b68a74); box-shadow: inset 0 0 0 1px #cf8a7c; }
.tray { display: flex; align-items: center; gap: 8px; color: #fff; padding-right: 17px; }
.kb { margin-right: 6px; }
.lang { margin-left: 7px; }
.tray time { margin-left: 8px; text-align: center; font-size: 11px; line-height: 17px; }
```
